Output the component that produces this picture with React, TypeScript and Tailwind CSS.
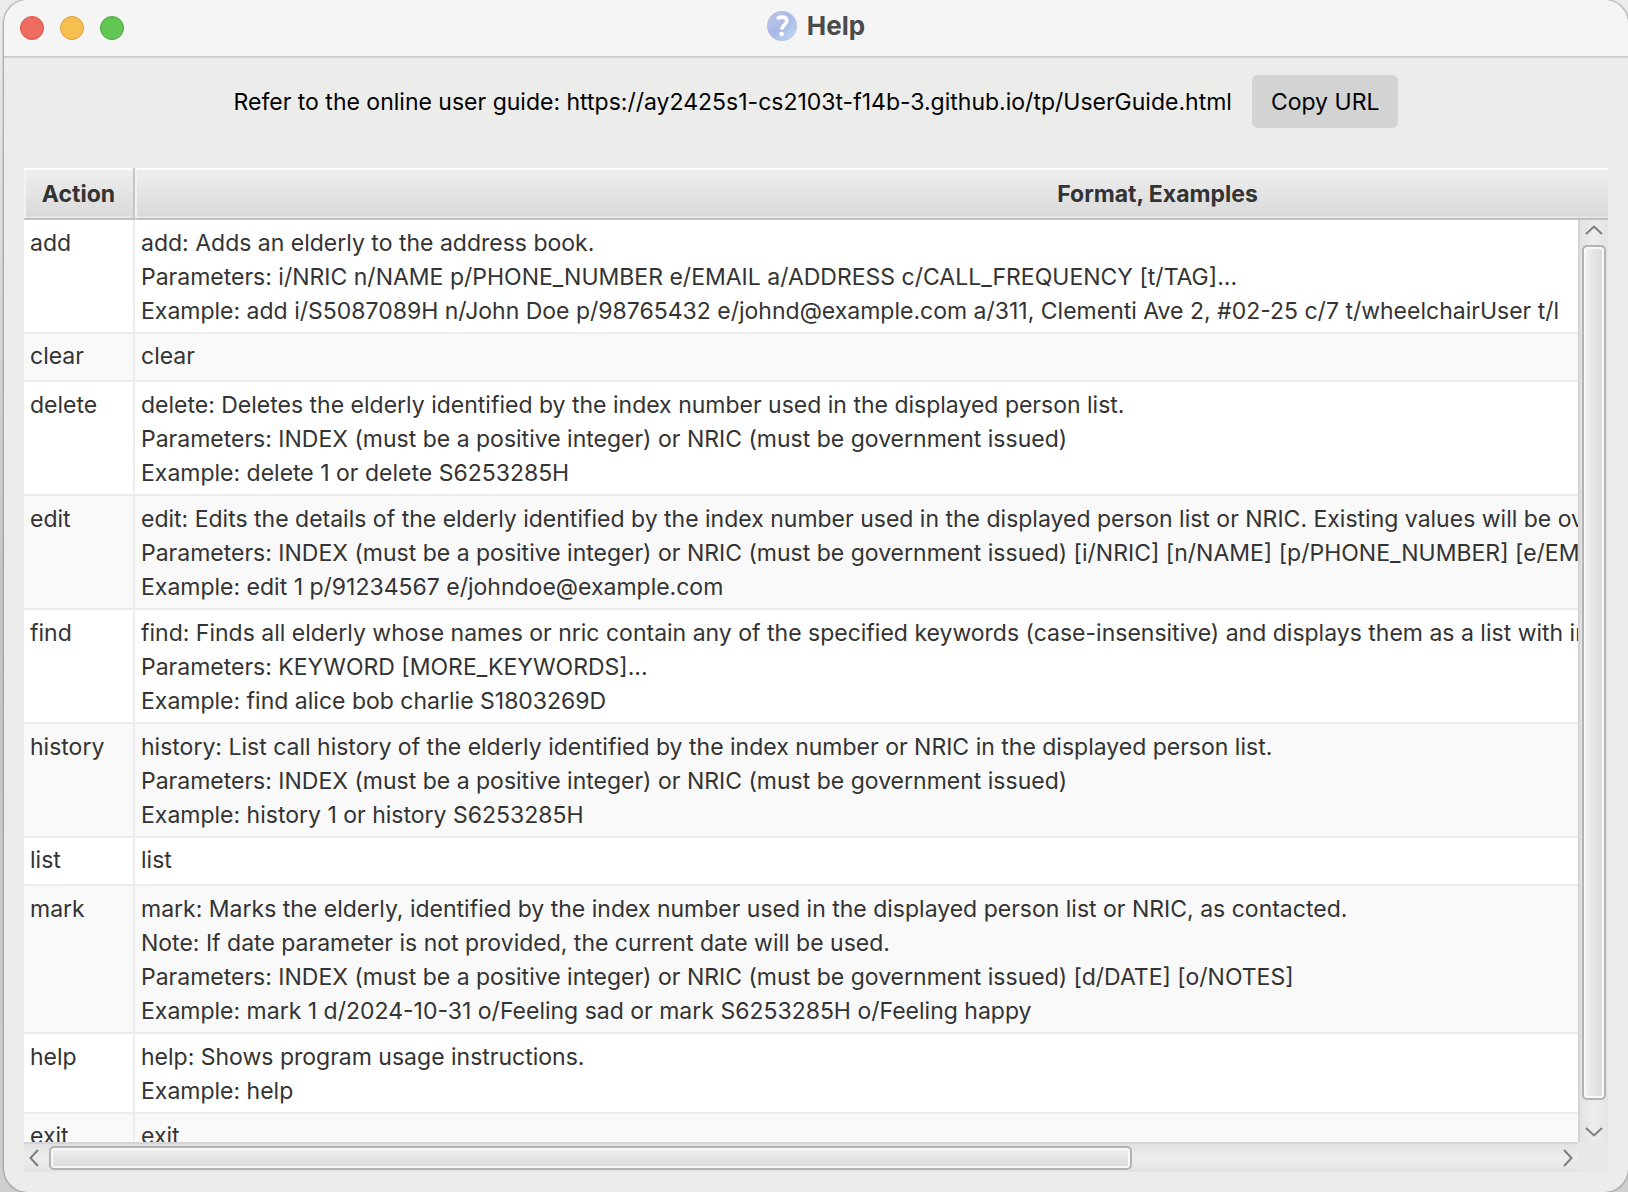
const USER_GUIDE_URL = "https://ay2425s1-cs2103t-f14b-3.github.io/tp/UserGuide.html";

type Command = { action: string; lines: string[] };

const commands: Command[] = [
  {
    action: "add",
    lines: [
      "add: Adds an elderly to the address book.",
      "Parameters: i/NRIC n/NAME p/PHONE_NUMBER e/EMAIL a/ADDRESS c/CALL_FREQUENCY [t/TAG]...",
      "Example: add i/S5087089H n/John Doe p/98765432 e/johnd@example.com a/311, Clementi Ave 2, #02-25 c/7 t/wheelchairUser t/l",
    ],
  },
  { action: "clear", lines: ["clear"] },
  {
    action: "delete",
    lines: [
      "delete: Deletes the elderly identified by the index number used in the displayed person list.",
      "Parameters: INDEX (must be a positive integer) or NRIC (must be government issued)",
      "Example: delete 1 or delete S6253285H",
    ],
  },
  {
    action: "edit",
    lines: [
      "edit: Edits the details of the elderly identified by the index number used in the displayed person list or NRIC. Existing values will be over",
      "Parameters: INDEX (must be a positive integer) or NRIC (must be government issued) [i/NRIC] [n/NAME] [p/PHONE_NUMBER] [e/EM",
      "Example: edit 1 p/91234567 e/johndoe@example.com",
    ],
  },
  {
    action: "find",
    lines: [
      "find: Finds all elderly whose names or nric contain any of the specified keywords (case-insensitive) and displays them as a list with ind",
      "Parameters: KEYWORD [MORE_KEYWORDS]...",
      "Example: find alice bob charlie S1803269D",
    ],
  },
  {
    action: "history",
    lines: [
      "history: List call history of the elderly identified by the index number or NRIC in the displayed person list.",
      "Parameters: INDEX (must be a positive integer) or NRIC (must be government issued)",
      "Example: history 1 or history S6253285H",
    ],
  },
  { action: "list", lines: ["list"] },
  {
    action: "mark",
    lines: [
      "mark: Marks the elderly, identified by the index number used in the displayed person list or NRIC, as contacted.",
      "Note: If date parameter is not provided, the current date will be used.",
      "Parameters: INDEX (must be a positive integer) or NRIC (must be government issued) [d/DATE] [o/NOTES]",
      "Example: mark 1 d/2024-10-31 o/Feeling sad or mark S6253285H o/Feeling happy",
    ],
  },
  { action: "help", lines: ["help: Shows program usage instructions.", "Example: help"] },
  { action: "exit", lines: ["exit"] },
];

function TitleBar() {
  return (
    <header className="relative flex h-[58px] shrink-0 items-center justify-center gap-2.5 border-b-2 border-[#cfcfd1] bg-[#f5f5f5] pb-1">
      <div className="absolute left-4 top-4 flex gap-4">
        <button type="button" aria-label="Close" className="size-6 rounded-full border border-[#dd5146] bg-[#ed6b5f]" />
        <button type="button" aria-label="Minimize" className="size-6 rounded-full border border-[#dba23c] bg-[#f5c04f]" />
        <button type="button" aria-label="Zoom" className="size-6 rounded-full border border-[#45a939] bg-[#62c655]" />
      </div>
      <svg viewBox="0 0 30 30" className="size-[30px]" aria-hidden="true">
        <defs>
          <linearGradient id="badge" x1="0" y1="0" x2="1" y2="1">
            <stop offset="0" stopColor="#b3bdea" />
            <stop offset="0.5" stopColor="#a9b8e5" />
            <stop offset="1" stopColor="#c0e2f8" />
          </linearGradient>
        </defs>
        <circle cx="15" cy="15" r="14.7" fill="url(#badge)" stroke="#b4bad6" strokeWidth="0.6" />
        <path d="M0.8 17C10 17.5 16 14 21 2a14.3 14.3 0 0 0-20.2 15Z" fill="#fff" opacity="0.08" />
        <path d="M10 7.800C12.500 5.600 19.700 4.900 19.900 9.900C20 13.400 14.900 13.700 14.700 18.500" fill="none" stroke="#fff" strokeWidth="3.600" />
        <circle cx="14.600" cy="23" r="2.300" fill="#fff" />
      </svg>
      <h1 className="text-[26px] leading-8 font-bold text-[#4b4b4b]">Help</h1>
    </header>
  );
}

function VerticalScrollBar() {
  return (
    <div className="absolute bottom-[30px] right-0 top-[52px] flex w-[30px] flex-col border-l-2 border-[#d4d4d4] bg-linear-to-r from-[#e2e2e2] via-[#ededed] to-[#e4e4e4] px-0.5">
      <button type="button" aria-label="Scroll up" className="flex h-[25px] shrink-0 items-center justify-center pb-1.5">
        <svg viewBox="0 0 18 10" className="h-2.5 w-[18px]" fill="none" stroke="#7d7d7d" strokeWidth="2">
          <path d="M1 9L9 1.500L17 9" />
        </svg>
      </button>
      <div className="flex-1">
        <div className="h-[98%] rounded-[5px] border-2 border-[#b3b3b3] bg-linear-to-r from-[#f1f1f1] to-[#dadada] shadow-[inset_0_0_0_2px_#f8f8f8]" />
      </div>
      <button type="button" aria-label="Scroll down" className="flex h-[25px] shrink-0 items-center justify-center pt-1">
        <svg viewBox="0 0 18 10" className="h-2.5 w-[18px]" fill="none" stroke="#7d7d7d" strokeWidth="2">
          <path d="M1 1L9 8.500L17 1" />
        </svg>
      </button>
    </div>
  );
}

function HorizontalScrollBar() {
  return (
    <div className="absolute inset-x-0 bottom-0 flex h-[30px] bg-[#e8e8e8] pr-[30px]">
      <div className="flex flex-1 border-t-2 border-[#d4d4d4] bg-linear-to-b from-[#e2e2e2] via-[#ededed] to-[#e4e4e4] py-0.5">
        <button type="button" aria-label="Scroll left" className="flex w-[25px] shrink-0 items-center justify-center pr-1.5">
          <svg viewBox="0 0 10 18" className="h-[18px] w-2.5" fill="none" stroke="#7d7d7d" strokeWidth="2">
            <path d="M9 1L1.500 9L9 17" />
          </svg>
        </button>
        <div className="flex-1">
          <div className="h-full w-[72%] rounded-[5px] border-2 border-[#b3b3b3] bg-linear-to-b from-[#f1f1f1] to-[#dadada] shadow-[inset_0_0_0_2px_#f8f8f8]" />
        </div>
        <button type="button" aria-label="Scroll right" className="flex w-[25px] shrink-0 items-center justify-center pl-1">
          <svg viewBox="0 0 10 18" className="h-[18px] w-2.5" fill="none" stroke="#7d7d7d" strokeWidth="2">
            <path d="M1 1L8.500 9L1 17" />
          </svg>
        </button>
      </div>
    </div>
  );
}

function CommandRow({ action, lines }: Command) {
  const padding = lines.length > 1 ? "pt-1.5 pb-1" : "pt-[5px] pb-[7px]";
  return (
    <tr className="bg-white align-top even:bg-[#f9f9f9]">
      <td className={`border-b-2 border-r-2 border-[#ececec] px-1.5 ${padding}`}>{action}</td>
      <td className={`border-b-2 border-[#ececec] px-1.5 ${padding}`}>
        {lines.map((line) => (
          <div key={line}>{line}</div>
        ))}
      </td>
    </tr>
  );
}

export default function App() {
  return (
    <div className="h-screen overflow-hidden bg-linear-to-b from-[#ececec] via-[#c6c6c6] to-[#cfcfcf] pl-1 font-[Inter,'Liberation_Sans',sans-serif] text-[23px] leading-[34px]">
      <main className="flex h-full flex-col overflow-hidden rounded-3xl bg-[#ececea] shadow-[0_0_2px_1px_#9a9a9a]">
        <TitleBar />
        <section className="flex shrink-0 items-center justify-center gap-5 pb-10 pt-[17px] text-black">
          <p className="whitespace-nowrap">Refer to the online user guide: {USER_GUIDE_URL}</p>
          <button type="button" className="h-[53px] whitespace-nowrap rounded-md bg-[#d3d3d3] px-[19px]">
            Copy URL
          </button>
        </section>
        <section className="relative mx-5 mb-5 min-h-0 flex-1 overflow-hidden bg-white">
          <table className="w-[2156px] table-fixed border-separate border-spacing-0 whitespace-nowrap text-[#333]">
            <colgroup>
              <col className="w-[111px]" />
              <col />
            </colgroup>
            <thead>
              <tr className="h-[52px] text-[#333]">
                <th scope="col" className="border-b-2 border-r-2 border-b-[#c2c2c2] border-r-[#c6c6c6] bg-linear-to-b from-[#efefef] to-[#d9d9d9] p-0 pt-0.5 font-bold shadow-[inset_0_2px_0_#fdfdfd,inset_2px_0_0_#f2f2f2,inset_0_-2px_0_#e3e3e3]">
                  Action
                </th>
                <th scope="col" className="border-b-2 border-b-[#c2c2c2] bg-linear-to-b from-[#efefef] to-[#d9d9d9] p-0 pt-0.5 font-bold shadow-[inset_0_2px_0_#fdfdfd,inset_2px_0_0_#f2f2f2,inset_0_-2px_0_#e3e3e3]">
                  Format, Examples
                </th>
              </tr>
            </thead>
            <tbody>
              {commands.map((command) => (
                <CommandRow key={command.action} {...command} />
              ))}
            </tbody>
          </table>
          <HorizontalScrollBar />
          <VerticalScrollBar />
        </section>
      </main>
    </div>
  );
}
